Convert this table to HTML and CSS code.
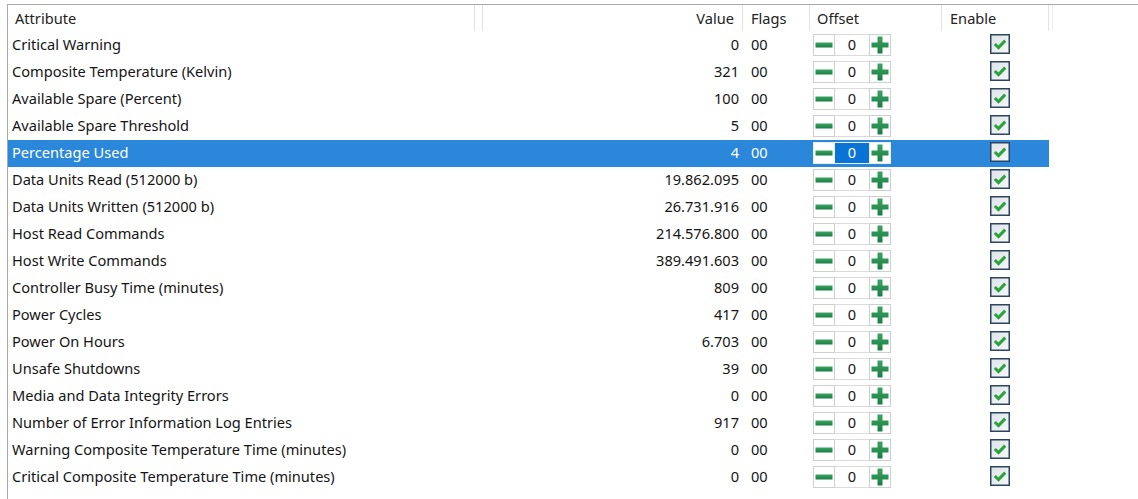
FILE: index.html
```html
<!DOCTYPE html>
<html>
<head>
<meta charset="utf-8">
<link rel="stylesheet" href="styles.css">
</head>
<body>
<svg width="0" height="0" class="defs">
  <defs>
    <linearGradient id="gr" x1="0" y1="0" x2="0" y2="1">
      <stop offset="0" stop-color="#3aa562"/>
      <stop offset="1" stop-color="#1a7d43"/>
    </linearGradient>
    <linearGradient id="cb" x1="0" y1="0" x2="1" y2="1">
      <stop offset="0" stop-color="#dde3e9"/>
      <stop offset="1" stop-color="#f6f7f9"/>
    </linearGradient>
    <symbol id="minus" viewBox="0 0 18 18"><rect x="0.5" y="6.5" width="17" height="5" fill="url(#gr)"/></symbol>
    <symbol id="plus" viewBox="0 0 18 18"><path d="M6.5 0.5h5v6h6v5h-6v6h-5v-6h-6v-5h6z" fill="url(#gr)"/></symbol>
    <symbol id="check" viewBox="0 0 20 20"><rect x="0.75" y="0.75" width="18.5" height="18.5" fill="url(#cb)" stroke="#2d4560" stroke-width="1.5"/><path d="M4.8 10 L8.5 13.6 L15.2 6.6" fill="none" stroke="#2aa33c" stroke-width="3"/></symbol>
  </defs>
</svg>
<div class="frame">
  <div class="row head">
    <div class="c attr">Attribute</div>
    <div class="c gapc"></div>
    <div class="c val">Value</div>
    <div class="c flags">Flags</div>
    <div class="c off">Offset</div>
    <div class="c en">Enable</div>
    <div class="c tail"></div>
  </div>
  <div id="rows"></div>
</div>
<script src="app.js"></script>
</body>
</html>
```
FILE: app.js
```js
var data = [
  ["Critical Warning","0"],
  ["Composite Temperature (Kelvin)","321"],
  ["Available Spare (Percent)","100"],
  ["Available Spare Threshold","5"],
  ["Percentage Used","4"],
  ["Data Units Read (512000 b)","19.862.095"],
  ["Data Units Written (512000 b)","26.731.916"],
  ["Host Read Commands","214.576.800"],
  ["Host Write Commands","389.491.603"],
  ["Controller Busy Time (minutes)","809"],
  ["Power Cycles","417"],
  ["Power On Hours","6.703"],
  ["Unsafe Shutdowns","39"],
  ["Media and Data Integrity Errors","0"],
  ["Number of Error Information Log Entries","917"],
  ["Warning Composite Temperature Time (minutes)","0"],
  ["Critical Composite Temperature Time (minutes)","0"]
];
var html = "";
data.forEach(function (d, i) {
  html += '<div class="row item' + (i === 4 ? ' sel' : '') + '">' +
    '<div class="c attr">' + d[0] + '</div>' +
    '<div class="c gapc"></div>' +
    '<div class="c val">' + d[1] + '</div>' +
    '<div class="c flags">00</div>' +
    '<div class="c off"><div class="spin">' +
      '<span class="btn"><svg width="18" height="18"><use href="#minus"/></svg></span>' +
      '<span class="num">0</span>' +
      '<span class="btn"><svg width="18" height="18"><use href="#plus"/></svg></span>' +
    '</div></div>' +
    '<div class="c en"><svg class="cbx" width="20" height="20"><use href="#check"/></svg></div>' +
    '</div>';
});
document.getElementById("rows").innerHTML = html;
```
FILE: styles.css
```css
html, body {
  margin: 0;
  padding: 0;
  background: #fff;
}
body {
  font-family: "Noto Sans", "Open Sans", sans-serif;
  font-size: 14.6px;
  color: #151515;
  width: 1138px;
  height: 499px;
  overflow: hidden;
}
.defs {
  position: absolute;
}
.frame {
  margin: 4px 0 0 7px;
  border-top: 1px solid #a9a9a9;
  border-left: 1px solid #a9a9a9;
  height: 494px;
}
.row {
  display: grid;
  grid-template-columns: 467px 8px 260px 67px 132px 107px;
  height: 27px;
  width: 1041px;
}
.head {
  grid-template-columns: 467px 8px 260px 67px 132px 107px 4px;
  width: 1045px;
  color: #222;
}
.head .c {
  border-right: 1px solid #e3e3e3;
  height: 26px;
  line-height: 27px;
}
.c {
  white-space: nowrap;
  line-height: 24px;
  box-sizing: border-box;
}
.head .attr { padding-left: 7px; }
.item .attr { padding-left: 4px; }
.val {
  text-align: right;
  padding-right: 4px;
}
.head .val { padding-right: 8px; }
.flags { padding-left: 8px; }
.head .off { padding-left: 7px; }
.head .en { padding-left: 8px; }
.head .tail { border-right: 1px solid #eeeeee; }
.sel {
  background: #2a87d9;
  color: #fff;
}
.item .off {
  padding: 2px 0 0 3px;
}
.spin {
  display: flex;
  height: 22px;
  width: 78px;
}
.btn {
  width: 22px;
  height: 22px;
  box-sizing: border-box;
  border: 1px solid #cfcfcf;
  background: #fff;
  display: flex;
  align-items: center;
  justify-content: center;
}
.num {
  width: 34px;
  height: 22px;
  box-sizing: border-box;
  border-top: 1px solid #dcdcdc;
  border-bottom: 1px solid #dcdcdc;
  background: #fff;
  color: #151515;
  text-align: center;
  line-height: 19px;
}
.sel .btn {
  border-color: #e8eef5;
}
.sel .num {
  background: #0a74d6;
  color: #fff;
  border-color: #e8eef5;
}
.item .en {
  padding: 2px 0 0 48px;
}
.cbx {
  display: block;
}
```
